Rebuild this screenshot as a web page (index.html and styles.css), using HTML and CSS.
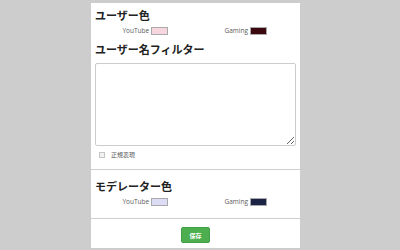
FILE: index.html
```html
<!DOCTYPE html>
<html lang="ja">
<head>
<meta charset="utf-8">
<link rel="stylesheet" href="styles.css">
</head>
<body>
<div class="panel">
  <section class="sec sec-user">
    <h2 class="title">ユーザー色</h2>
    <div class="colors">
      <div class="pick"><span class="lbl">YouTube</span><span class="sw sw-yt-user"></span></div>
      <div class="pick"><span class="lbl">Gaming</span><span class="sw sw-gm-user"></span></div>
    </div>
    <h2 class="title title-filter">ユーザー名フィルター</h2>
    <textarea class="filter"></textarea>
    <label class="check"><span class="box"></span><span class="check-lbl">正規表現</span></label>
  </section>
  <section class="sec sec-mod">
    <h2 class="title">モデレーター色</h2>
    <div class="colors">
      <div class="pick"><span class="lbl">YouTube</span><span class="sw sw-yt-mod"></span></div>
      <div class="pick"><span class="lbl">Gaming</span><span class="sw sw-gm-mod"></span></div>
    </div>
  </section>
  <div class="actions">
    <button class="save">保存</button>
  </div>
</div>
</body>
</html>
```
FILE: styles.css
```css
html, body {
  margin: 0;
  padding: 0;
  background: #cdcdcd;
  height: 250px;
  overflow: hidden;
  font-family: "Open Sans", "Noto Sans CJK JP", sans-serif;
  color: #333;
}
.panel {
  width: 209px;
  margin: 3px 0 0 91px;
  background: #fff;
  height: 245px;
}
.sec {
  padding: 5px 4px 0 4px;
  border-bottom: 1px solid #cfcfcf;
}
.sec-user {
  height: 161px;
}
.sec-mod {
  padding-top: 9px;
  height: 39px;
}
.title {
  margin: 0;
  font-size: 11px;
  line-height: 14px;
  font-weight: bold;
  color: #222;
  font-family: "Noto Sans CJK JP", sans-serif;
}
.title-filter {
  margin-top: 6px;
}
.colors {
  display: grid;
  grid-template-columns: 1fr 1fr;
  margin-top: 4px;
  height: 10px;
}
.pick {
  display: flex;
  align-items: center;
  justify-content: center;
  gap: 2px;
}
.lbl {
  font-size: 6.5px;
  line-height: 8px;
  color: #5a5a5a;
}
.sw {
  display: block;
  width: 15px;
  height: 6px;
  border: 1px solid #a9a9a9;
}
.sw-yt-user { background: #f7d6df; }
.sw-gm-user { background: #3c0810; }
.sw-yt-mod { background: #dcdcf4; }
.sw-gm-mod { background: #1b2445; }
.filter {
  display: block;
  box-sizing: border-box;
  width: 201px;
  height: 83px;
  margin: 7px 0 0 0;
  border: 1px solid #ccc;
  border-radius: 2px;
  padding: 0;
  resize: vertical;
  font-size: 7px;
}
.check {
  display: flex;
  align-items: center;
  gap: 6px;
  margin: 5px 0 0 4px;
  height: 8px;
}
.box {
  display: block;
  width: 4px;
  height: 4px;
  border: 1px solid #c4c4c4;
  background: #f2f2f2;
}
.check-lbl {
  font-size: 6px;
  line-height: 8px;
  color: #5a5a5a;
}
.actions {
  display: flex;
  justify-content: center;
  padding-top: 8px;
}
.save {
  width: 29px;
  height: 16px;
  padding: 0;
  border: 1px solid #43a047;
  border-radius: 2px;
  background: #4cae4f;
  color: #fff;
  font-size: 6px;
  font-weight: bold;
  font-family: "Noto Sans CJK JP", sans-serif;
}
```
